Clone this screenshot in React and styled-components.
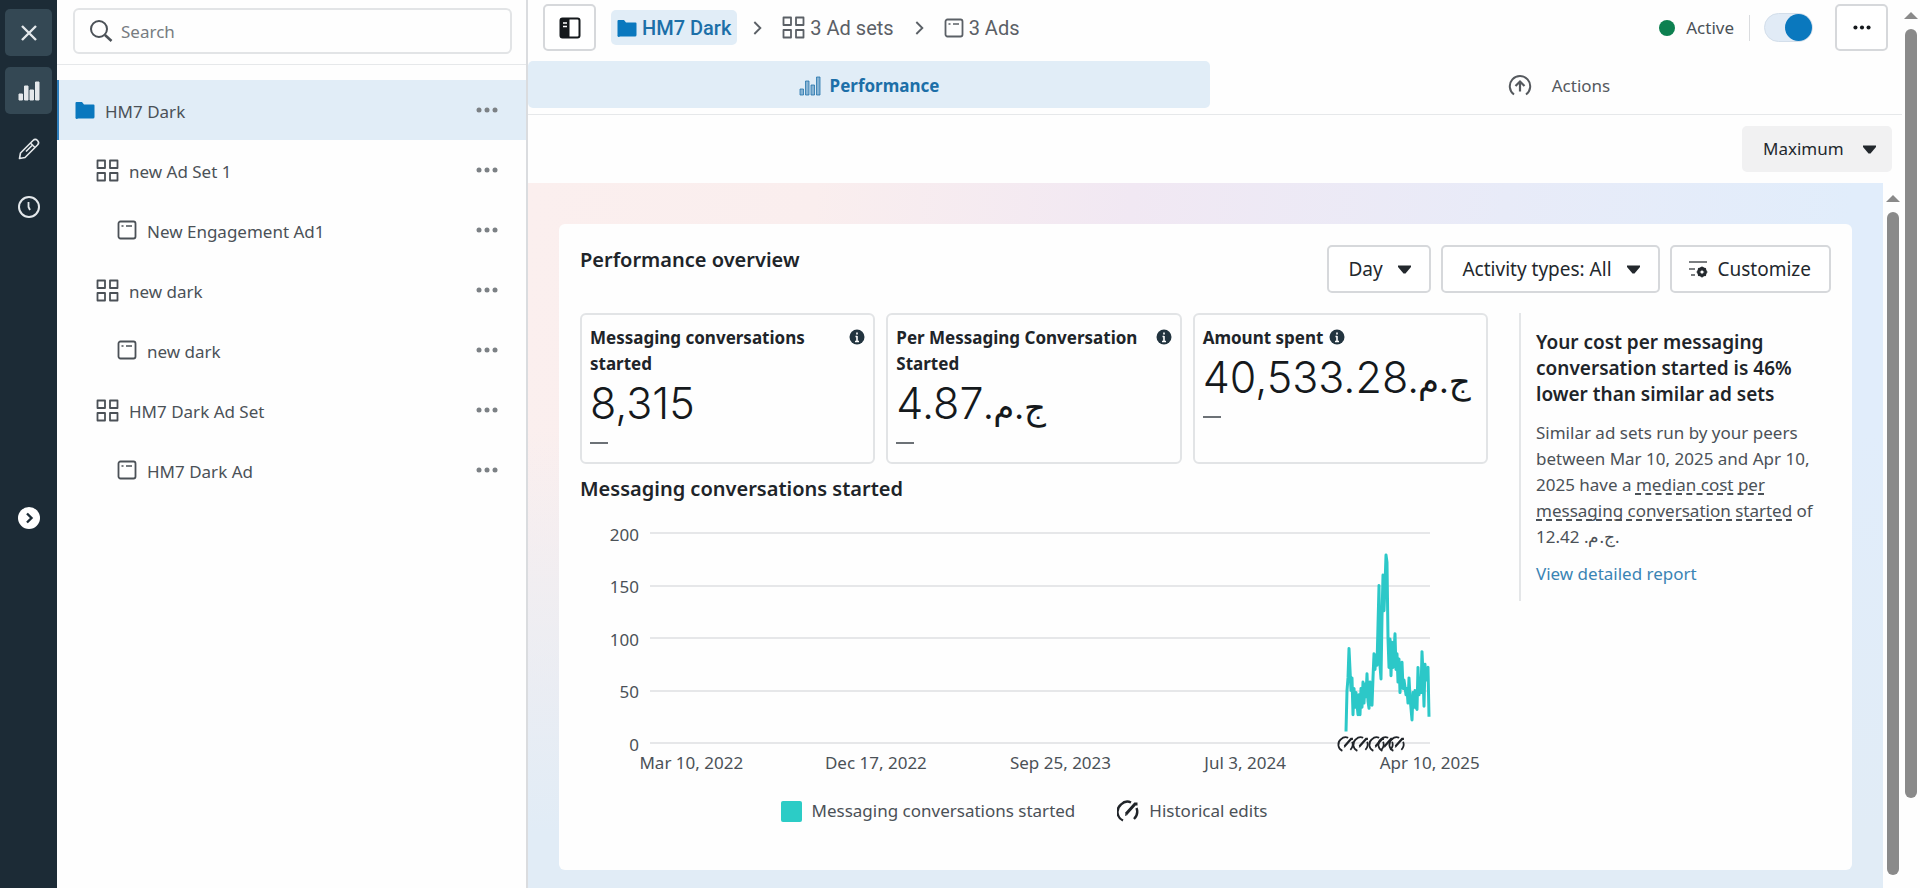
import React from 'react';
import styled, { createGlobalStyle, css } from 'styled-components';

const GlobalStyle = createGlobalStyle`
  * {
    box-sizing: border-box;
  }

  body {
    margin: 0;
    background: #fefefe;
    color: #4b5157;
    font-family: "Noto Sans", "Open Sans", sans-serif;
    font-size: 17px;
    line-height: 26px;
  }

  button, input, select {
    font: inherit;
    color: inherit;
  }

  h2, h3, p, ul {
    margin: 0;
    padding: 0;
  }
`;

const Page = styled.div`
  display: flex;
  min-height: 100vh;
`;

/* dark icon rail */

const Rail = styled.nav`
  flex: 0 0 57px;
  display: flex;
  flex-direction: column;
  align-items: center;
  gap: 11px;
  padding-top: 9px;
  background: #1c2b36;
`;

const RailButton = styled.button`
  display: flex;
  align-items: center;
  justify-content: center;
  width: 47px;
  height: 47px;
  padding: 0;
  border: 0;
  border-radius: 5px;
  color: #e4e8eb;
  background: ${(props) => (props.$filled ? '#344854' : 'transparent')};
`;

const ExpandButton = styled.button`
  display: flex;
  align-items: center;
  justify-content: center;
  width: 22px;
  height: 22px;
  margin-top: 266px;
  padding: 0;
  border: 0;
  border-radius: 50%;
  color: #1c2b36;
  background: #fff;
`;

/* campaign tree */

const Sidebar = styled.aside`
  flex: 0 0 471px;
  border-right: 2px solid #dadcdf;
`;

const SearchArea = styled.div`
  padding: 8px 14px 10px 16px;
  border-bottom: 1px solid #e6e8ea;
`;

const SearchBox = styled.label`
  display: flex;
  align-items: center;
  gap: 8px;
  height: 46px;
  padding: 0 14px;
  border: 2px solid #e2e4e6;
  border-radius: 6px;
`;

const SearchInput = styled.input`
  flex: 1;
  min-width: 0;
  border: 0;
  padding: 2px 0 0;
  outline: 0;
  background: transparent;

  &::placeholder {
    color: #777c81;
    opacity: 1;
  }
`;

const Tree = styled.ul`
  padding-top: 15px;
  list-style: none;
`;

const TreeRow = styled.li`
  display: flex;
  align-items: center;
  gap: 10px;
  height: 60px;
  padding-right: 28px;
  padding-left: ${(props) => 18 + props.$level * 21}px;
  ${(props) => props.$selected && css`
    background: #e1edf7;
    box-shadow: inset 2px 0 0 #2f7fbd;
  `}
`;

const TreeName = styled.span`
  flex: 1;
  padding-top: 4px;
`;

const DotsButton = styled.button`
  display: flex;
  padding: 6px 0;
  border: 0;
  background: transparent;
  color: #7c8185;
`;

/* main area */

const Main = styled.main`
  flex: 1;
  min-width: 0;
  display: flex;
  flex-direction: column;
`;

const TopBar = styled.header`
  display: flex;
  align-items: center;
  height: 61px;
  padding: 0 14px 6px 15px;
`;

const SquareButton = styled.button`
  display: flex;
  align-items: center;
  justify-content: center;
  width: 53px;
  height: 47px;
  padding: 0;
  border: 2px solid #d6d8db;
  border-radius: 5px;
  background: #fff;
  color: #15191c;
`;

const Crumbs = styled.nav`
  flex: 1;
  display: flex;
  align-items: center;
  gap: 12px;
  margin-left: 15px;
  color: #5b6066;
  font-family: Roboto, "Noto Sans", sans-serif;
  font-size: 20px;
`;

const Crumb = styled.a`
  display: flex;
  align-items: center;
  gap: 5px;
  height: 35px;
  padding: 0 5px;
  border-radius: 5px;
  color: inherit;
  text-decoration: none;
  ${(props) => props.$current && css`
    padding: 0 6px;
    background: #e1edf7;
    color: #1c6fa8;
    font-weight: 500;
  `}
`;

const Status = styled.div`
  display: flex;
  align-items: center;
  gap: 11px;
  padding-right: 15px;
  border-right: 1px solid #dadcdf;

  &::before {
    content: "";
    width: 16px;
    height: 16px;
    border-radius: 50%;
    background: #0d8050;
  }
`;

const Switch = styled.input`
  appearance: none;
  position: relative;
  width: 49px;
  height: 29px;
  margin: 0 22px 0 14px;
  border: 1px solid #d3deea;
  border-radius: 15px;
  background: #e1ebf6;

  &::before {
    content: "";
    position: absolute;
    top: 0;
    right: 0;
    width: 27px;
    height: 27px;
    border-radius: 50%;
    background: #0a78be;
  }
`;

const Tabs = styled.div`
  display: grid;
  grid-template-columns: 1fr 1fr;
  padding: 0 10px 6px 0;
  border-bottom: 1px solid #e6e8ea;
`;

const Tab = styled.button`
  display: flex;
  align-items: center;
  justify-content: center;
  gap: ${(props) => (props.$active ? 9 : 20)}px;
  height: 47px;
  padding: 2px 0 0 ${(props) => (props.$active ? 0 : 16)}px;
  border: 0;
  border-radius: 5px;
  background: ${(props) => (props.$active ? '#e1edf7' : 'transparent')};
  color: ${(props) => (props.$active ? '#1c6fa8' : '#55595e')};
  font-weight: ${(props) => (props.$active ? 700 : 400)};
`;

const RangeBar = styled.div`
  display: flex;
  justify-content: flex-end;
  padding: 11px 10px;
`;

const SelectBox = styled.div`
  display: flex;
  align-items: center;
  position: relative;
  height: ${(props) => (props.$filled ? 46 : 48)}px;
  border: 2px solid ${(props) => (props.$filled ? '#f1f1f2' : '#d6d8db')};
  border-radius: 5px;
  background: ${(props) => (props.$filled ? '#f1f1f2' : '#fff')};
  color: #23282d;
  font-size: ${(props) => (props.$filled ? 17 : 19)}px;

  svg {
    position: absolute;
    right: ${(props) => (props.$filled ? 13 : 17)}px;
    pointer-events: none;
  }
`;

const Select = styled.select`
  appearance: none;
  height: 100%;
  padding: 0 46px 0 19px;
  border: 0;
  background: transparent;
`;

const Scroller = styled.div`
  flex: 1;
  display: flex;
`;

const Canvas = styled.div`
  flex: 1;
  min-width: 0;
  padding: 41px 31px 18px;
  background:
    linear-gradient(180deg, rgba(225, 237, 246, 0) 35%, #e1ecf6 92%),
    linear-gradient(97deg, #fbefee 0%, #faeeee 20%, #f1e8f3 42%, #e8ebf8 68%, #e1edfb 92%);
`;

const Card = styled.section`
  min-height: 646px;
  padding: 21px;
  border-radius: 6px;
  background: #fefefe;
`;

const CardHeader = styled.div`
  display: flex;
  align-items: flex-start;
  gap: 10px;
`;

const Heading = styled.h2`
  flex: 1;
  color: #202429;
  font-size: 20px;
  font-weight: 600;
  line-height: 30px;
`;

const CustomizeButton = styled.button`
  display: flex;
  align-items: center;
  gap: 9px;
  height: 48px;
  padding: 0 18px 0 16px;
  border: 2px solid #d6d8db;
  border-radius: 5px;
  background: #fff;
  color: #23282d;
  font-size: 19px;
`;

const CardBody = styled.div`
  display: flex;
  gap: 31px;
  margin-top: 20px;
`;

const Report = styled.div`
  flex: 1;
  min-width: 0;
`;

const Metrics = styled.div`
  display: grid;
  grid-template-columns: repeat(3, 1fr);
  gap: 11px;
  margin-bottom: 10px;
`;

const Metric = styled.article`
  height: 151px;
  padding: 10px 8px;
  border: 2px solid #e2e4e6;
  border-radius: 6px;
`;

const MetricTitle = styled.h3`
  display: flex;
  align-items: flex-start;
  justify-content: ${(props) => (props.$inline ? 'flex-start' : 'space-between')};
  gap: 6px;
  color: #202429;
  font-size: 17px;
  font-weight: 700;

  svg {
    flex: none;
    margin-top: 4px;
  }
`;

const MetricValue = styled.p`
  height: 52px;
  color: #15191c;
  font-family: Inter, sans-serif;
  font-size: 43px;
  font-weight: 300;
  line-height: 52px;
  white-space: nowrap;
`;

const Currency = styled.bdi`
  font-family: Inter, "DejaVu Sans", sans-serif;
  font-size: 34px;
  font-weight: 400;
  line-height: 1;
`;

const NoChange = styled.div`
  width: 18px;
  height: 2px;
  margin-top: 13px;
  background: #6c7176;
`;

/* chart */

const Chart = styled.figure`
  position: relative;
  margin: 16px 0 0;
`;

const Scale = styled.div`
  display: flex;
  flex-direction: column;
  justify-content: space-between;
  height: 236px;
  padding-right: 58px;
`;

const Tick = styled.div`
  display: flex;
  align-items: center;
  gap: 11px;
  height: 26px;

  span {
    width: 59px;
    padding-top: 3px;
    text-align: right;
  }

  &::after {
    content: "";
    flex: 1;
    height: 2px;
    background: #e6e7e9;
  }
`;

const Series = styled.div`
  position: absolute;
  top: 13px;
  left: 70px;
  right: 58px;
  height: 210px;

  svg {
    display: block;
    width: 100%;
    height: 100%;
    overflow: visible;
  }
`;

const EditMark = styled.span`
  position: absolute;
  top: 203px;

  svg {
    width: 16px;
    height: 16px;
  }
`;

const Dates = styled.div`
  display: grid;
  grid-template-columns: repeat(5, 1fr);
  margin: -6px -34px 0 19px;
  text-align: center;
`;

const Legend = styled.figcaption`
  display: flex;
  justify-content: center;
  gap: 42px;
  margin: 22px 20px 0 0;
`;

const LegendItem = styled.span`
  display: flex;
  align-items: center;
  gap: 10px;
`;

const Swatch = styled.i`
  width: 21px;
  height: 21px;
  border-radius: 2px;
  background: #2cccc6;
`;

const Insight = styled.aside`
  flex: 0 0 312px;
  align-self: flex-start;
  padding: 16px 0 14px 15px;
  border-left: 2px solid #e4e6e8;
`;

const InsightTitle = styled.h3`
  margin-bottom: 13px;
  color: #202429;
  font-size: 19px;
  font-weight: 600;
`;

const InsightText = styled.p`
  margin-bottom: 11px;

  u {
    text-decoration: underline dashed 2px;
    text-underline-offset: 2px;
    text-decoration-skip-ink: none;
  }
`;

const ReportLink = styled.a`
  color: #3a84b4;
  text-decoration: none;
`;

/* scroll bars */

const ScrollTrack = styled.div`
  flex: 0 0 ${(props) => (props.$inner ? 19 : 18)}px;
  display: flex;
  flex-direction: column;
  align-items: center;
  gap: 10px;
  padding: 12px 0 ${(props) => (props.$inner ? 13 : 90)}px;
  background: #fefefe;
`;

const Thumb = styled.div`
  flex: 1;
  width: 12px;
  border-radius: 6px;
  background: #8a8a8a;
`;

function Icon({ w = 24, h = w, box = `0 0 ${w} ${h}`, children }) {
  return (
    <svg width={w} height={h} viewBox={box} fill="none" stroke="currentColor" aria-hidden="true">
      {children}
    </svg>
  );
}

const CloseIcon = () => (
  <Icon w={18}><path d="M2 2l14 14M16 2L2 16" strokeWidth="2.4" /></Icon>
);

const BarsIcon = ({ faded }) => (
  <Icon w={22} h={20}>
    <g strokeWidth="1" stroke="currentColor" fill="currentColor" fillOpacity={faded ? 0.45 : 1} strokeOpacity={faded ? 0.75 : 1}>
      <path d="M1 13h3.500v6H1zM6.500 5h3.500v14H6.500zM12 9h3.500v10H12zM17.500 1H21v18h-3.500z" />
    </g>
  </Icon>
);

const PencilIcon = () => (
  <Icon w={24}>
    <path d="M2.500 21.500l1-5.500L16 3.500a2.800 2.800 0 0 1 4.500 4.500L8 20.500zM9 14.500l7-7M13.500 6l4.500 4.500" strokeWidth="1.600" strokeLinejoin="round" />
  </Icon>
);

const ClockIcon = () => (
  <Icon w={24}>
    <circle cx="12" cy="12" r="10" strokeWidth="2" />
    <path d="M11.500 7v5l1.500 3" strokeWidth="1.800" />
  </Icon>
);

const ChevronIcon = ({ size = 12, weight = 2.4 }) => (
  <Icon w={size} box="0 0 12 12"><path d="M4 1.500L8.500 6 4 10.500" strokeWidth={weight} /></Icon>
);

const SearchIcon = () => (
  <Icon w={24}>
    <circle cx="10" cy="10" r="8" strokeWidth="2" />
    <path d="M16 16l6.500 6" strokeWidth="2.600" />
  </Icon>
);

const FolderIcon = () => (
  <Icon w={20} h={18}>
    <path d="M1.500 1h5.500l2 2.500h9.500a1 1 0 0 1 1 1V16a1.500 1.500 0 0 1-1.500 1.500h-15A1.500 1.500 0 0 1 .5 16V2a1 1 0 0 1 1-1z" fill="#0a78be" stroke="none" />
  </Icon>
);

const AdSetIcon = () => (
  <Icon w={23}>
    <path d="M1.500 1.500h7.500v7.500H1.500zM14 1.500h7.500v7.500H14zM1.500 14h7.500v7.500H1.500zM14 14h7.500v7.500H14z" strokeWidth="1.800" strokeLinejoin="round" />
  </Icon>
);

const AdIcon = () => (
  <Icon w={20}>
    <rect x="1.500" y="1.500" width="17" height="17" rx="2" strokeWidth="1.800" />
    <path d="M4.500 6h2M9 6h6" strokeWidth="1.500" />
  </Icon>
);

const DotsIcon = ({ small }) => (
  <Icon w={small ? 18 : 22} h={small ? 5 : 6} box="0 0 22 6">
    <g fill="currentColor" stroke="none">
      <circle cx="3" cy="3" r="2.500" />
      <circle cx="11" cy="3" r="2.500" />
      <circle cx="19" cy="3" r="2.500" />
    </g>
  </Icon>
);

const PanelIcon = () => (
  <Icon w={22}>
    <rect x="1.500" y="1.500" width="19" height="19" rx="2" strokeWidth="2" />
    <path d="M2 2h8v18H2z" fill="currentColor" />
    <path d="M4 6h4M4 9.500h4" stroke="#fff" strokeWidth="1.500" />
  </Icon>
);

const ActionsIcon = () => (
  <Icon w={24}>
    <path d="M6 20.500a10.200 10.200 0 1 1 12 0" strokeWidth="2" />
    <path d="M12 17.500V8M7.500 12L12 7.500l4.500 4.500" strokeWidth="2.200" />
  </Icon>
);

const CaretIcon = () => (
  <Icon w={15} h={9}><path d="M1 0.500h13v1.500L8.500 8.500h-2L1 2z" fill="currentColor" stroke="none" /></Icon>
);

const CustomizeIcon = () => (
  <Icon w={20} h={18}>
    <path d="M1 2h18M1 9h6M3 15h4" strokeWidth="1.500" opacity="0.8" />
    <circle cx="14" cy="12" r="3.600" strokeWidth="2.600" />
    <path d="M14 6.500v11M8.500 12h11M10.200 8.200l7.600 7.600M17.800 8.200l-7.600 7.600" strokeWidth="1.200" />
    <circle cx="14" cy="12" r="1.500" fill="#fff" stroke="none" />
  </Icon>
);

const InfoIcon = () => (
  <Icon w={16}>
    <circle cx="8" cy="8" r="7.500" fill="#22343f" stroke="none" />
    <path d="M8 3.500v2M8 7v5.500M6.500 7.500H8M6 12.500h4" stroke="#fff" strokeWidth="1.600" />
  </Icon>
);

const EditIcon = () => (
  <Icon w={22} box="0 0 22 22">
    <path d="M6 20.500A9.500 9.500 0 0 1 4 4.500C7 1.500 11 1 14 2.500" strokeWidth="2.400" stroke="#202429" />
    <path d="M19.500 8c1.500 4 .5 8-2.500 11" strokeWidth="2.400" stroke="#202429" />
    <path d="M9 14l9-10 2.500 0" strokeWidth="3" stroke="#202429" />
    <path d="M8 16l.5-2.500 2 1.500z" fill="#202429" stroke="none" />
  </Icon>
);

const UpIcon = () => (
  <Icon w={14} h={7}><path d="M7 0l7 7H0z" fill="#8a8a8a" stroke="none" /></Icon>
);

const tree = [
  { name: 'HM7 Dark', level: 0, icon: FolderIcon },
  { name: 'new Ad Set 1', level: 1, icon: AdSetIcon },
  { name: 'New Engagement Ad1', level: 2, icon: AdIcon },
  { name: 'new dark', level: 1, icon: AdSetIcon },
  { name: 'new dark', level: 2, icon: AdIcon },
  { name: 'HM7 Dark Ad Set', level: 1, icon: AdSetIcon },
  { name: 'HM7 Dark Ad', level: 2, icon: AdIcon },
];

const ticks = [200, 150, 100, 50, 0];
const dates = ['Mar 10, 2022', 'Dec 17, 2022', 'Sep 25, 2023', 'Jul 3, 2024', 'Apr 10, 2025'];

// percent of the time axis
const edits = [88.2, 90.1, 92.2, 93.3, 94.8];

// x on the 780 wide plot, conversations per day
const conversations = [
  [696, 11], [697, 50], [698, 62], [699, 90], [701, 50], [702, 62], [703, 27], [704, 52],
  [705, 34], [706, 48], [708, 27], [709, 46], [710, 27], [711, 52], [712, 34], [713, 58],
  [714, 38], [715, 56], [716, 44], [717, 66], [718, 40], [719, 33], [720, 58], [722, 36],
  [723, 62], [724, 85], [725, 70], [726, 84], [727, 74], [729, 150], [730, 74], [731, 61],
  [732, 120], [733, 160], [734, 126], [735, 150], [736, 179], [737, 172], [738, 100], [739, 72],
  [740, 99], [741, 64], [742, 96], [743, 72], [744, 86], [745, 104], [746, 70], [747, 85],
  [748, 58], [749, 80], [750, 48], [751, 72], [752, 77], [753, 52], [754, 60], [756, 46],
  [757, 52], [758, 38], [759, 62], [760, 44], [762, 22], [763, 48], [764, 34], [765, 50],
  [766, 34], [767, 32], [768, 72], [769, 46], [770, 54], [771, 48], [772, 87], [773, 66],
  [774, 35], [775, 75], [776, 60], [777, 70], [778, 72], [779, 25],
];

function Dropdown({ label, value, filled }) {
  return (
    <SelectBox $filled={filled}>
      <Select aria-label={label} defaultValue={value}>
        <option>{value}</option>
      </Select>
      <CaretIcon />
    </SelectBox>
  );
}

function MetricCard({ title, value, currency, inline }) {
  return (
    <Metric>
      <MetricTitle $inline={inline}>
        <span>{title}</span>
        <InfoIcon />
      </MetricTitle>
      <MetricValue>
        {value}
        {currency && <Currency dir="rtl">ج.م.</Currency>}
      </MetricValue>
      <NoChange />
    </Metric>
  );
}

function ConversationsChart() {
  const points = conversations.map(([x, n]) => `${x},${210 - n * 1.05}`).join(' ');

  return (
    <Chart>
      <Scale>
        {ticks.map((t) => <Tick key={t}><span>{t}</span></Tick>)}
      </Scale>
      <Series>
        <svg viewBox="0 0 780 210" preserveAspectRatio="none" aria-hidden="true">
          <polyline points={points} fill="none" stroke="#2cc8c8" strokeWidth="3" strokeLinejoin="round" vectorEffect="non-scaling-stroke" />
        </svg>
        {edits.map((left) => (
          <EditMark key={left} style={{ left: `${left}%` }}><EditIcon /></EditMark>
        ))}
      </Series>
      <Dates>
        {dates.map((d) => <span key={d}>{d}</span>)}
      </Dates>
      <Legend>
        <LegendItem><Swatch />Messaging conversations started</LegendItem>
        <LegendItem><EditIcon />Historical edits</LegendItem>
      </Legend>
    </Chart>
  );
}

function App() {
  return (
    <Page>
      <GlobalStyle />
      <Rail>
        <RailButton $filled aria-label="Close"><CloseIcon /></RailButton>
        <RailButton $filled aria-label="Charts"><BarsIcon /></RailButton>
        <RailButton aria-label="Edit"><PencilIcon /></RailButton>
        <RailButton aria-label="History"><ClockIcon /></RailButton>
        <ExpandButton aria-label="Expand"><ChevronIcon /></ExpandButton>
      </Rail>

      <Sidebar>
        <SearchArea>
          <SearchBox>
            <SearchIcon />
            <SearchInput type="text" placeholder="Search" aria-label="Search" />
          </SearchBox>
        </SearchArea>
        <Tree>
          {tree.map(({ name, level, icon: RowIcon }, i) => (
            <TreeRow key={i} $level={level} $selected={i === 0}>
              <RowIcon />
              <TreeName>{name}</TreeName>
              <DotsButton aria-label="More"><DotsIcon /></DotsButton>
            </TreeRow>
          ))}
        </Tree>
      </Sidebar>

      <Main>
        <TopBar>
          <SquareButton aria-label="Toggle side panel"><PanelIcon /></SquareButton>
          <Crumbs>
            <Crumb href="#" $current><FolderIcon />HM7 Dark</Crumb>
            <ChevronIcon size={16} weight={1.4} />
            <Crumb href="#"><AdSetIcon />3 Ad sets</Crumb>
            <ChevronIcon size={16} weight={1.4} />
            <Crumb href="#"><AdIcon />3 Ads</Crumb>
          </Crumbs>
          <Status>Active</Status>
          <Switch type="checkbox" role="switch" aria-label="Active" defaultChecked />
          <SquareButton aria-label="More"><DotsIcon small /></SquareButton>
        </TopBar>
        <Tabs>
          <Tab $active><BarsIcon faded />Performance</Tab>
          <Tab><ActionsIcon />Actions</Tab>
        </Tabs>
        <RangeBar>
          <Dropdown label="Date range" value="Maximum" filled />
        </RangeBar>

        <Scroller>
          <Canvas>
            <Card>
              <CardHeader>
                <Heading>Performance overview</Heading>
                <Dropdown label="Breakdown" value="Day" />
                <Dropdown label="Activity types" value="Activity types: All" />
                <CustomizeButton><CustomizeIcon />Customize</CustomizeButton>
              </CardHeader>
              <CardBody>
                <Report>
                  <Metrics>
                    <MetricCard title="Messaging conversations started" value="8,315" />
                    <MetricCard title="Per Messaging Conversation Started" value="4.87" currency />
                    <MetricCard title="Amount spent" value="40,533.28" currency inline />
                  </Metrics>
                  <Heading>Messaging conversations started</Heading>
                  <ConversationsChart />
                </Report>
                <Insight>
                  <InsightTitle>Your cost per messaging conversation started is 46% lower than similar ad sets</InsightTitle>
                  <InsightText>
                    Similar ad sets run by your peers between Mar 10, 2025 and Apr 10, 2025 have
                    a <u>median cost per messaging conversation started</u> of
                    12.42 <bdi dir="rtl">ج.م.</bdi>.
                  </InsightText>
                  <ReportLink href="#">View detailed report</ReportLink>
                </Insight>
              </CardBody>
            </Card>
          </Canvas>
          <ScrollTrack $inner>
            <UpIcon />
            <Thumb />
          </ScrollTrack>
        </Scroller>
      </Main>

      <ScrollTrack>
        <UpIcon />
        <Thumb />
      </ScrollTrack>
    </Page>
  );
}

export default App;
